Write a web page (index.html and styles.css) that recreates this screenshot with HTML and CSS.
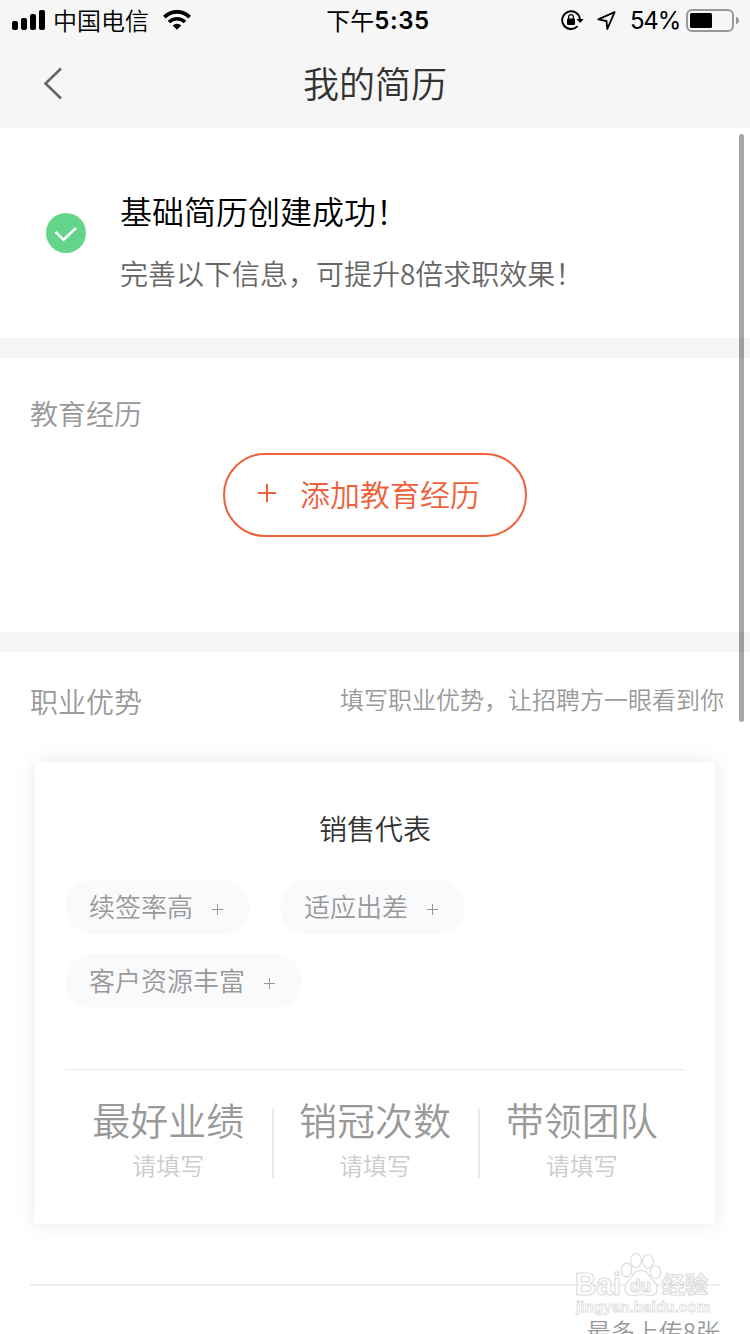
FILE: index.html
```html
<!DOCTYPE html>
<html lang="zh-CN">
<head>
    <meta charset="UTF-8">
    <title>我的简历</title>
    <link rel="stylesheet" href="styles.css">
</head>
<body>
    <header class="header">
        <div class="status">
            <div class="status-left">
                <svg width="34" height="20" viewBox="0 0 34 20">
                    <rect x="0" y="11" width="6" height="9" rx="2"/>
                    <rect x="9" y="8" width="6" height="12" rx="2"/>
                    <rect x="18" y="4" width="6" height="16" rx="2"/>
                    <rect x="27" y="0" width="6" height="20" rx="2"/>
                </svg>
                <span class="carrier">中国电信</span>
                <svg class="wifi" width="28" height="20" viewBox="0 0 28 20">
                    <path d="M1.3 7.1a18 18 0 0 1 25.4 0" fill="none" stroke="#000" stroke-width="3.8"/>
                    <path d="M6 12a11.3 11.3 0 0 1 16 0" fill="none" stroke="#000" stroke-width="3.6"/>
                    <path d="M9.7 15.6a6 6 0 0 1 8.6 0L14 19.8z"/>
                </svg>
            </div>
            <div class="time">下午<b>5:35</b></div>
            <div class="status-right">
                <svg width="23" height="20" viewBox="0 0 23 20">
                    <path d="M16.6 16.2A8.9 8.9 0 1 1 18.9 9" fill="none" stroke="#000" stroke-width="1.9"/>
                    <path d="M15.6 9h7l-3.5 4z"/>
                    <rect x="6" y="8.6" width="8" height="6.4" rx="1"/>
                    <path d="M7.6 9V7a2.4 2.4 0 0 1 4.8 0v2" fill="none" stroke="#000" stroke-width="1.3"/>
                </svg>
                <svg class="arrow" width="19" height="20" viewBox="0 0 19 20">
                    <path d="M17.6 2.2L1.3 9.3l8.2 1.7.8 8z" fill="none" stroke="#000" stroke-width="1.8" stroke-linejoin="round"/>
                </svg>
                <span class="percent">54%</span>
                <svg class="battery" width="53" height="24" viewBox="0 0 53 24">
                    <rect x="1" y="2" width="46" height="21" rx="5" fill="none" stroke="#999" stroke-width="2"/>
                    <rect x="4" y="5" width="22" height="15" rx="1.5"/>
                    <path d="M50 8.5c4 1.5 4 6.5 0 8z" fill="#999"/>
                </svg>
            </div>
        </div>
        <nav class="nav">
            <svg class="back" width="20" height="34" viewBox="0 0 20 34">
                <path d="M18 1.5L2.5 16.5 18 31.5" fill="none" stroke="#666" stroke-width="2.6"/>
            </svg>
            <h1>我的简历</h1>
        </nav>
    </header>

    <section class="notice">
        <svg width="40" height="40" viewBox="0 0 40 40">
            <circle cx="20" cy="20" r="20" fill="#62d58a"/>
            <path d="M9.5 18.8l8 8L30 15" fill="none" stroke="#fff" stroke-width="2.6"/>
        </svg>
        <div>
            <h2>基础简历创建成功！</h2>
            <p>完善以下信息，可提升8倍求职效果！</p>
        </div>
    </section>

    <section class="edu">
        <h3>教育经历</h3>
        <button class="add"><i class="plus"></i>添加教育经历</button>
    </section>

    <section class="advantage">
        <div class="title">
            <h3>职业优势</h3>
            <span>填写职业优势，让招聘方一眼看到你</span>
        </div>
        <div class="card">
            <h4>销售代表</h4>
            <div class="tags">
                <span class="tag">续签率高<i class="plus"></i></span>
                <span class="tag">适应出差<i class="plus"></i></span>
                <span class="tag">客户资源丰富<i class="plus"></i></span>
            </div>
            <ul class="record">
                <li><strong>最好业绩</strong><span>请填写</span></li>
                <li><strong>销冠次数</strong><span>请填写</span></li>
                <li><strong>带领团队</strong><span>请填写</span></li>
            </ul>
        </div>
        <p class="upload">最多上传8张</p>
    </section>

    <div class="scrollbar"></div>

    <!-- 水印 -->
    <svg class="watermark" width="150" height="74" viewBox="0 0 150 74">
        <g fill="#fff" stroke="#d8d8d8" stroke-width="1.2">
            <text x="2" y="45" font-size="32" font-weight="700" textLength="46" lengthAdjust="spacingAndGlyphs">Bai</text>
            <ellipse cx="53.5" cy="20" rx="5.2" ry="6.8"/>
            <ellipse cx="63" cy="10.5" rx="5.2" ry="7.2"/>
            <ellipse cx="75" cy="11.5" rx="5.4" ry="7"/>
            <ellipse cx="82.5" cy="22" rx="5.2" ry="6.5"/>
            <path d="M68 20.5c-8 0-8 6-12 10-6 5-6 15 3 15 4 0 6-1 9-1s6 1 9 1c9 0 9-10 3-15-4-4-5-10-12-10z"/>
            <text x="57" y="42" font-size="19" font-weight="700" textLength="21" lengthAdjust="spacingAndGlyphs">du</text>
            <text x="89" y="43" font-size="23" font-weight="700" textLength="46">经验</text>
            <text x="3" y="62" font-size="15" font-weight="700" stroke-width=".8" textLength="134">jingyan.baidu.com</text>
        </g>
    </svg>
</body>
</html>
```
FILE: styles.css
```css
*{
    margin:0;
    padding:0;
    box-sizing:border-box;
}
body{
    position:relative;
    height:1334px;
    overflow:hidden;
    background:#fff;
    color:#999;
    font-family:"Noto Sans CJK SC", sans-serif;
    font-weight:350;
}
h1,h2,h3,h4,strong{
    font-weight:350;
}
svg{
    display:block;
    flex-shrink:0;
}
.header{
    height:128px;
    background:#f6f6f6;
    color:#000;
}
.status{
    display:grid;
    grid-template-columns:1fr auto 1fr;
    align-items:center;
    height:40px;
    padding:0 11px 0 12px;
    font-size:24px;
    line-height:38px;
}
.status-left,.status-right{
    display:flex;
    align-items:center;
}
.status-right{
    justify-content:flex-end;
}
.carrier{
    margin-left:7px;
}
.wifi{
    margin-left:14px;
}
.time{
    display:flex;
    padding-left:5px;
    font-weight:400;
}
.time b{
    padding-top:1px;
    font-family:Inter, sans-serif;
    font-weight:600;
    letter-spacing:.6px;
}
.arrow{
    margin-left:13px;
}
.percent{
    margin:0 6px 0 14px;
    padding-top:2px;
    font-family:Inter, sans-serif;
    font-weight:400;
    font-size:24px;
    letter-spacing:-1.2px;
}
.nav{
    display:grid;
    grid-template-columns:44px 1fr 44px;
    align-items:center;
    height:88px;
}
.nav h1{
    height:86px;
    margin-top:-2px;
    color:#333;
    font-size:36px;
    line-height:84px;
    text-align:center;
}
.back{
    justify-self:end;
    margin-right:-19px;
}

/* 创建成功 */
.notice{
    display:flex;
    align-items:center;
    gap:34px;
    height:210px;
    padding-left:46px;
}
.notice h2{
    margin-top:17px;
    color:#000;
    font-size:32px;
    line-height:62px;
}
.notice p{
    color:#666;
    font-size:28px;
    line-height:64px;
}

/* 教育经历 */
.edu{
    height:314px;
    padding:35px 30px 0;
    border:solid #f5f5f5;
    border-width:20px 0;
}
h3{
    font-size:28px;
    line-height:40px;
}
.add{
    display:flex;
    align-items:center;
    width:304px;
    height:84px;
    margin:20px auto 0;
    padding:0 0 4px 33px;
    border:2px solid #ee613b;
    border-radius:42px;
    background:#fff;
    color:#ee613b;
    font:350 30px/76px "Noto Sans CJK SC", sans-serif;
}
.plus{
    width:18px;
    height:18px;
    background:linear-gradient(currentColor,currentColor) center/100% 2px no-repeat,
        linear-gradient(currentColor,currentColor) center/2px 100% no-repeat;
}
.add .plus{
    margin-right:24px;
}

/* 职业优势 */
.title{
    display:flex;
    justify-content:space-between;
    height:110px;
    padding:29px 26px 0 30px;
}
.title span{
    font-size:24px;
    line-height:36px;
}
.card{
    height:462px;
    margin:0 35px;
    padding:46px 30px 0;
    box-shadow:0 0 20px rgba(0,0,0,.09);
}
.card h4{
    color:#333;
    font-size:28px;
    line-height:40px;
    text-align:center;
}
.tags{
    display:flex;
    flex-wrap:wrap;
    align-content:flex-start;
    gap:20px 30px;
    height:221px;
    padding-top:32px;
}
.tag{
    display:flex;
    align-items:center;
    height:54px;
    padding:0 27px 2px 24px;
    border-radius:27px;
    background:#f9fafc;
    font-size:26px;
    line-height:52px;
}
.tag .plus{
    width:11px;
    height:11px;
    margin:7px 0 0 19px;
    background-size:100% 1px,1px 100%;
}
.record{
    display:flex;
    padding-top:38px;
    border-top:1px solid #ebebeb;
    list-style:none;
}
.record li{
    flex:1;
    display:flex;
    flex-direction:column;
    height:70px;
    text-align:center;
}
.record li + li{
    background:linear-gradient(#ebebeb,#ebebeb) left/2px 100% no-repeat;
}
.record strong{
    margin-top:-17px;
    font-size:38px;
    line-height:56px;
}
.record span{
    margin-top:2px;
    color:#ccc;
    font-size:24px;
    line-height:32px;
}
.upload{
    margin:60px 30px 0;
    padding-top:27px;
    border-top:2px solid #f0f0f0;
    font-size:24px;
    line-height:36px;
    text-align:right;
}

.scrollbar{
    position:absolute;
    top:134px;
    right:6px;
    width:5px;
    height:588px;
    border-radius:3px;
    background:rgba(0,0,0,.35);
}
.watermark{
    position:absolute;
    left:573px;
    top:1250px;
    opacity:.85;
    font-family:"Liberation Sans", "Noto Sans CJK SC", sans-serif;
}
```
